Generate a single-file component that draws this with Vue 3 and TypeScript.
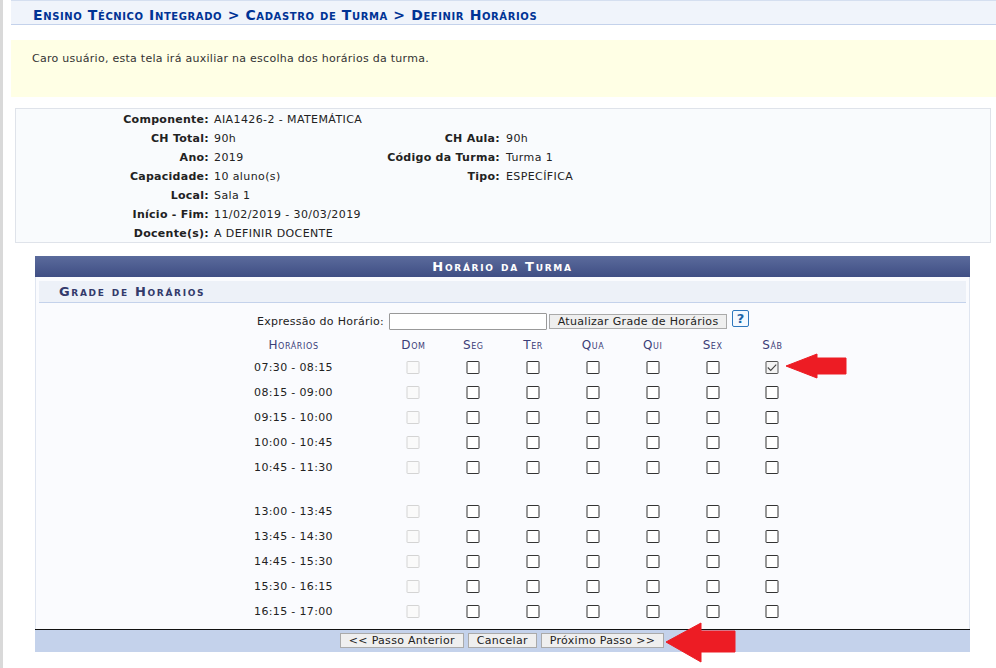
<script setup lang="ts">
const days: string[] = ['Dom', 'Seg', 'Ter', 'Qua', 'Qui', 'Sex', 'Sáb']
const morning: string[] = ['07:30 - 08:15', '08:15 - 09:00', '09:15 - 10:00', '10:00 - 10:45', '10:45 - 11:30']
const afternoon: string[] = ['13:00 - 13:45', '13:45 - 14:30', '14:45 - 15:30', '15:30 - 16:15', '16:15 - 17:00']
const info: [string, string, string?, string?][] = [
  ['Componente:', 'AIA1426-2 - MATEMÁTICA'],
  ['CH Total:', '90h', 'CH Aula:', '90h'],
  ['Ano:', '2019', 'Código da Turma:', 'Turma 1'],
  ['Capacidade:', '10 aluno(s)', 'Tipo:', 'ESPECÍFICA'],
  ['Local:', 'Sala 1'],
  ['Início - Fim:', '11/02/2019 - 30/03/2019'],
  ['Docente(s):', 'A DEFINIR DOCENTE'],
]
</script>

<template>
  <div class="page">
    <div class="content">
      <h2 class="crumb">Ensino Técnico Integrado &gt; Cadastro de Turma &gt; Definir Horários</h2>
      <div class="notice">Caro usuário, esta tela irá auxiliar na escolha dos horários da turma.</div>
      <div class="info">
        <div v-for="row in info" :key="row[0]" class="info-row">
          <b class="k1">{{ row[0] }}</b>
          <span class="v1">{{ row[1] }}</span>
          <b class="k2">{{ row[2] }}</b>
          <span class="v2">{{ row[3] }}</span>
        </div>
      </div>
      <div class="panel">
        <div class="panel-title">Horário da Turma</div>
        <div class="panel-body">
          <div class="sub-title">Grade de Horários</div>
          <div class="expr">
            <label>Expressão do Horário:</label>
            <input class="expr-input" type="text" />
            <button class="btn update">Atualizar Grade de Horários</button>
            <span class="help">?</span>
          </div>
          <div class="grid head">
            <span class="time">Horários</span>
            <span class="spacer"></span>
            <span v-for="d in days" :key="d" class="cell">{{ d }}</span>
          </div>
          <div v-for="t in morning" :key="t" class="grid row">
            <span class="time">{{ t }}</span>
            <span class="spacer"></span>
            <span v-for="(d, i) in days" :key="d" class="cell">
              <i class="box" :class="{ off: i === 0, on: i === 6 && t === morning[0] }">
                <svg v-if="i === 6 && t === morning[0]" viewBox="0 0 13 13" width="11" height="11"><path d="M1.5 6.5 5 10 11.5 3" fill="none" stroke="#444" stroke-width="1.3" /></svg>
              </i>
            </span>
          </div>
          <div class="gap"></div>
          <div v-for="t in afternoon" :key="t" class="grid row">
            <span class="time">{{ t }}</span>
            <span class="spacer"></span>
            <span v-for="(d, i) in days" :key="d" class="cell">
              <i class="box" :class="{ off: i === 0 }"></i>
            </span>
          </div>
        </div>
        <div class="footer">
          <button class="btn">&lt;&lt; Passo Anterior</button>
          <button class="btn">Cancelar</button>
          <button class="btn">Próximo Passo &gt;&gt;</button>
        </div>
      </div>
    </div>
    <svg class="arrow a1" viewBox="0 0 62 26" width="62" height="26">
      <path d="M1 13 32 1V5H61V21H32V25Z" fill="#ed1c24" stroke="#ed1c24" stroke-linejoin="round" />
    </svg>
    <svg class="arrow a2" viewBox="0 0 71 41" width="71" height="41">
      <path d="M1 20 36 1V9H70V30H36V40Z" fill="#ed1c24" stroke="#ed1c24" stroke-linejoin="round" />
    </svg>
  </div>
</template>

<style>
html, body { margin: 0; background: #fff; }
</style>

<style scoped>
.page {
  position: relative;
  width: 996px;
  height: 668px;
  overflow: hidden;
  box-sizing: border-box;
  border-left: 3px solid #d9d9d9;
  padding-left: 8px;
  font: 11px "DejaVu Sans", Verdana, sans-serif;
  letter-spacing: 0.27px;
  color: #222;
}
.content { width: 985px; }
.crumb {
  margin: 0;
  height: 25px;
  box-sizing: border-box;
  padding: 6px 0 0 22px;
  background: #f0f4fb;
  border-top: 1px solid #d5dff0;
  border-bottom: 1px solid #c4d2eb;
  color: #003395;
  font: bold 14px/16px "DejaVu Sans", Verdana, sans-serif;
  font-variant: small-caps;
  letter-spacing: 0.6px;
  white-space: nowrap;
}
.notice {
  margin-top: 15px;
  height: 57px;
  box-sizing: border-box;
  padding: 12px 21px;
  background: #ffffe5;
  line-height: 14px;
  color: #333;
}
.info {
  margin: 11px 5px 0 4px;
  height: 135px;
  box-sizing: border-box;
  border: 1px solid #dfe3ea;
  background: #f9fbfd;
  padding: 1px 0;
}
.info-row { display: flex; height: 19px; line-height: 20px; }
.k1 { width: 193px; text-align: right; flex: none; }
.v1 { width: 170px; margin-left: 5px; flex: none; letter-spacing: 0.4px; }
.k2 { width: 116px; text-align: right; flex: none; }
.v2 { margin-left: 6px; letter-spacing: 0.4px; }
.panel { margin: 13px 0 0 24px; width: 935px; }
.panel-title {
  height: 21px;
  background: linear-gradient(#5b6b9c, #3f4e84);
  color: #fff;
  text-align: center;
  font: bold 13px/21px "DejaVu Sans", Verdana, sans-serif;
  font-variant: small-caps;
  letter-spacing: 1.72px;
}
.panel-body {
  height: 352px;
  box-sizing: border-box;
  border: 1px solid #dfe5f0;
  border-top: 0;
  border-bottom: 0;
  background: #fafbfe;
  padding: 4px 3px 0;
}
.sub-title {
  height: 22px;
  box-sizing: border-box;
  padding-left: 20px;
  background: #edf1f8;
  border-bottom: 1px solid #c4d2eb;
  color: #333a6b;
  font: bold 13px/22px "DejaVu Sans", Verdana, sans-serif;
  font-variant: small-caps;
  letter-spacing: 1.68px;
}
.expr {
  display: flex;
  align-items: center;
  height: 24px;
  margin-top: 6px;
  padding-left: 218px;
  color: #222;
}
.expr-input {
  width: 158px;
  height: 17px;
  box-sizing: border-box;
  margin: 0 0 0 5px;
  border: 1px solid #999;
  border-radius: 1px;
  background: #fff;
  padding: 0;
}
.btn {
  height: 15px;
  box-sizing: border-box;
  padding: 0 8px;
  border: 1px solid #aaa;
  border-radius: 0;
  background: #efefef;
  color: #222;
  font: 11px/13px "DejaVu Sans", Verdana, sans-serif;
  letter-spacing: 0.3px;
  white-space: nowrap;
}
.update { margin-left: 2px; margin-top: 1px; width: 178px; padding: 0; }
.help {
  width: 17px;
  height: 17px;
  box-sizing: border-box;
  margin: -6px 0 0 5px;
  border: 1px solid #2f78bd;
  border-radius: 2px;
  background: #f4f9ff;
  color: #1d65a8;
  font: bold 13px/15px "DejaVu Sans", sans-serif;
  letter-spacing: 0;
  text-align: center;
}
.grid {
  display: grid;
  grid-template-columns: 120px 30px repeat(7, 59.85px);
  margin-left: 194px;
  align-items: center;
}
.head {
  height: 22px;
  padding-top: 2px;
  box-sizing: border-box;
  color: #3b3d78;
  font-size: 12px;
  font-variant: small-caps;
  letter-spacing: 0.6px;
}
.row { height: 25px; letter-spacing: 0.35px; }
.time { text-align: center; padding-left: 1px; }
.cell { display: flex; justify-content: center; align-items: center; transform: translateX(0.5px); }
.box {
  display: flex;
  align-items: center;
  justify-content: center;
  width: 13px;
  height: 13px;
  box-sizing: border-box;
  border: 1px solid #333;
  border-radius: 1px;
  background: #fff;
}
.box.off { border-color: #d4d4d4; background: #fafafa; }
.box.on { border-color: #555; background: #f4f4f4; }
.gap { height: 19px; }
.footer {
  height: 23px;
  box-sizing: border-box;
  border-top: 1px solid #111;
  background: #c4d2eb;
  display: flex;
  justify-content: center;
  gap: 4px;
  padding-top: 3px;
  padding-right: 1px;
}
.arrow { position: absolute; }
.a1 { left: 782px; top: 353px; }
.a2 { left: 662px; top: 622px; }
</style>
